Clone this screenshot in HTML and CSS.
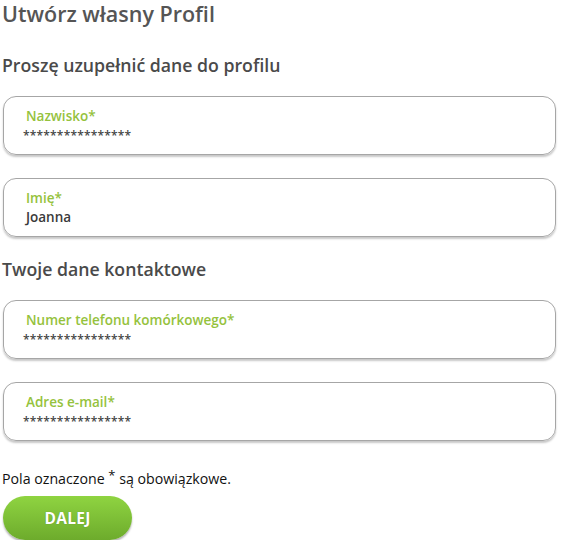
FILE: index.html
```html
<!DOCTYPE html>
<html lang="pl">
<head>
<meta charset="utf-8">
<title>Utwórz własny Profil</title>
<link rel="stylesheet" href="styles.css">
</head>
<body>
<main class="page">
  <h1 class="title">Utwórz własny Profil</h1>
  <h2 class="section">Proszę uzupełnić dane do profilu</h2>
  <div class="field">
    <div class="label">Nazwisko*</div>
    <div class="value masked">****************</div>
  </div>
  <div class="field">
    <div class="label">Imię*</div>
    <div class="value">Joanna</div>
  </div>
  <h2 class="section section-2">Twoje dane kontaktowe</h2>
  <div class="field">
    <div class="label">Numer telefonu komórkowego*</div>
    <div class="value masked">****************</div>
  </div>
  <div class="field">
    <div class="label">Adres e-mail*</div>
    <div class="value masked">****************</div>
  </div>
  <p class="note">Pola oznaczone <sup class="star">*</sup> są obowiązkowe.</p>
  <button class="btn" type="button">DALEJ</button>
</main>
</body>
</html>
```

FILE: styles.css
```css
html, body {
  margin: 0;
  padding: 0;
  background: #ffffff;
}
body {
  font-family: "Open Sans", "Noto Sans", sans-serif;
  color: #4d4d4d;
}
.page {
  padding: 0 9px 0 3px;
  display: flex;
  flex-direction: column;
  align-items: stretch;
}
.title {
  margin: 0 0 0 -1px;
  font-size: 21.5px;
  line-height: 28px;
  font-weight: 600;
  color: #555555;
}
.section {
  margin: 25px 0 0 -1px;
  font-size: 17.7px;
  line-height: 24px;
  font-weight: 600;
  color: #4a4a4a;
}
.section-2 {
  margin-top: 20px;
}
.field {
  margin-top: 18px;
  border: 1px solid #a6a6a6;
  border-radius: 13px;
  box-shadow: 0 2px 2px rgba(0, 0, 0, 0.22);
  padding: 10px 22px 9px 22px;
  display: flex;
  flex-direction: column;
}
.section + .field {
  margin-top: 19px;
}
.field + .field {
  margin-top: 23px;
}
.label {
  font-size: 13.5px;
  line-height: 19px;
  font-weight: 600;
  color: #95c23d;
}
.value {
  font-size: 13.5px;
  line-height: 19px;
  font-weight: 600;
  color: #3a3a3a;
}
.masked {
  margin-left: -3px;
  font-size: 12px;
  letter-spacing: 0.2px;
  color: #444444;
  font-weight: 600;
}
.note {
  margin: 29px 0 0 -1px;
  font-size: 14.2px;
  line-height: 18px;
  color: #111111;
}
.star {
  font-size: 13px;
  line-height: 0;
  vertical-align: 4px;
}
.btn {
  margin-top: 8px;
  align-self: flex-start;
  width: 129px;
  height: 44px;
  border: none;
  border-radius: 22px;
  background: linear-gradient(#8fd441, #6dab2c);
  box-shadow: 0 2px 2px rgba(0, 0, 0, 0.3);
  color: #ffffff;
  font-family: "Open Sans", "Noto Sans", sans-serif;
  font-size: 15.5px;
  font-weight: 700;
  letter-spacing: 0.3px;
  text-shadow: 0 0 1px rgba(0, 0, 0, 0.25);
  cursor: pointer;
}
```
